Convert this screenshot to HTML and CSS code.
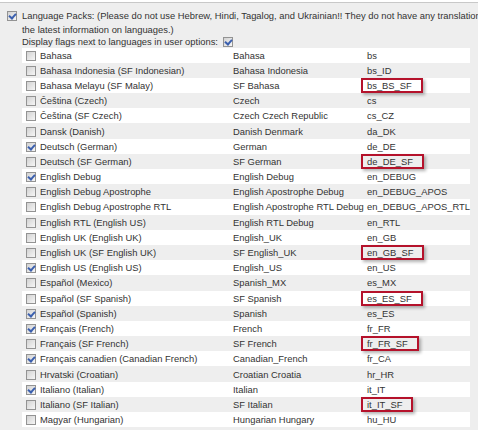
FILE: index.html
```html
<!DOCTYPE html>
<html lang="en">
<head>
  <meta charset="UTF-8" />
  <title>Language Packs</title>
  <link rel="stylesheet" href="styles.css">
</head>
<body>
  <div class="topline"></div>

  <div class="packs">
    <input type="checkbox" class="cb" checked>
    <div class="packs-body">
      <div class="note">Language Packs: (Please do not use Hebrew, Hindi, Tagalog, and Ukrainian!! They do not have any translations for<br>the latest information on languages.)</div>
      <div class="flags">Display flags next to languages in user options: <input type="checkbox" class="cb" checked></div>

      <table class="langs">
        <colgroup><col class="c1"><col class="c2"><col class="c3"></colgroup>
        <tr><td class="name"><input type="checkbox" class="cb">Bahasa</td><td>Bahasa</td><td>bs</td></tr>
        <tr><td class="name"><input type="checkbox" class="cb">Bahasa Indonesia (SF Indonesian)</td><td>Bahasa Indonesia</td><td>bs_ID</td></tr>
        <tr><td class="name"><input type="checkbox" class="cb">Bahasa Melayu (SF Malay)</td><td>SF Bahasa</td><td><span class="mark">bs_BS_SF</span></td></tr>
        <tr><td class="name"><input type="checkbox" class="cb">Čeština (Czech)</td><td>Czech</td><td>cs</td></tr>
        <tr><td class="name"><input type="checkbox" class="cb">Čeština (SF Czech)</td><td>Czech Czech Republic</td><td>cs_CZ</td></tr>
        <tr><td class="name"><input type="checkbox" class="cb">Dansk (Danish)</td><td>Danish Denmark</td><td>da_DK</td></tr>
        <tr><td class="name"><input type="checkbox" class="cb" checked>Deutsch (German)</td><td>German</td><td>de_DE</td></tr>
        <tr><td class="name"><input type="checkbox" class="cb">Deutsch (SF German)</td><td>SF German</td><td><span class="mark">de_DE_SF</span></td></tr>
        <tr><td class="name"><input type="checkbox" class="cb" checked>English Debug</td><td>English Debug</td><td>en_DEBUG</td></tr>
        <tr><td class="name"><input type="checkbox" class="cb">English Debug Apostrophe</td><td>English Apostrophe Debug</td><td>en_DEBUG_APOS</td></tr>
        <tr><td class="name"><input type="checkbox" class="cb">English Debug Apostrophe RTL</td><td>English Apostrophe RTL Debug</td><td>en_DEBUG_APOS_RTL</td></tr>
        <tr><td class="name"><input type="checkbox" class="cb">English RTL (English US)</td><td>English RTL Debug</td><td>en_RTL</td></tr>
        <tr><td class="name"><input type="checkbox" class="cb">English UK (English UK)</td><td>English_UK</td><td>en_GB</td></tr>
        <tr><td class="name"><input type="checkbox" class="cb">English UK (SF English UK)</td><td>SF English_UK</td><td><span class="mark">en_GB_SF</span></td></tr>
        <tr><td class="name"><input type="checkbox" class="cb" checked>English US (English US)</td><td>English_US</td><td>en_US</td></tr>
        <tr><td class="name"><input type="checkbox" class="cb">Español (Mexico)</td><td>Spanish_MX</td><td>es_MX</td></tr>
        <tr><td class="name"><input type="checkbox" class="cb">Español (SF Spanish)</td><td>SF Spanish</td><td><span class="mark">es_ES_SF</span></td></tr>
        <tr><td class="name"><input type="checkbox" class="cb" checked>Español (Spanish)</td><td>Spanish</td><td>es_ES</td></tr>
        <tr><td class="name"><input type="checkbox" class="cb" checked>Français (French)</td><td>French</td><td>fr_FR</td></tr>
        <tr><td class="name"><input type="checkbox" class="cb">Français (SF French)</td><td>SF French</td><td><span class="mark">fr_FR_SF</span></td></tr>
        <tr><td class="name"><input type="checkbox" class="cb" checked>Français canadien (Canadian French)</td><td>Canadian_French</td><td>fr_CA</td></tr>
        <tr><td class="name"><input type="checkbox" class="cb">Hrvatski (Croatian)</td><td>Croatian Croatia</td><td>hr_HR</td></tr>
        <tr><td class="name"><input type="checkbox" class="cb" checked>Italiano (Italian)</td><td>Italian</td><td>it_IT</td></tr>
        <tr><td class="name"><input type="checkbox" class="cb">Italiano (SF Italian)</td><td>SF Italian</td><td><span class="mark">it_IT_SF</span></td></tr>
        <tr><td class="name"><input type="checkbox" class="cb">Magyar (Hungarian)</td><td>Hungarian Hungary</td><td>hu_HU</td></tr>
      </table>
    </div>
  </div>
</body>
</html>
```

FILE: styles.css
```css
* { box-sizing: border-box; }
body {
  margin: 0;
  background: #eeeeee;
  font-family: "Liberation Sans", Arial, sans-serif;
  font-size: 9.4px;
  color: #333;
  overflow: hidden;
}
.topline {
  height: 3px;
  background: #fff;
  border-bottom: 1px solid #c8c8c8;
}

/* checkbox, old windows look */
.cb {
  appearance: none;
  -webkit-appearance: none;
  position: relative;
  width: 10px;
  height: 10px;
  margin: 0;
  border: 1px solid #939393;
  background: linear-gradient(135deg, #d2d2d2, #f6f6f6);
  vertical-align: middle;
  flex: none;
}
.cb:checked::after {
  content: "";
  position: absolute;
  left: 1px;
  top: 1px;
  width: 5px;
  height: 3px;
  border-left: 2px solid #3a5fae;
  border-bottom: 2px solid #3a5fae;
  transform: rotate(-48deg);
}

.packs {
  display: flex;
  padding: 6px 0 0 7px;
}
.packs > .cb { margin: 2px 5px 0 0; }
.packs-body { flex: 1; min-width: 0; }

.note, .flags {
  line-height: 13.5px;
  white-space: nowrap;
}
.flags { display: flex; align-items: center; gap: 5px; line-height: 12px; margin-bottom: -0.5px; }

.langs {
  width: 448px;
  border-collapse: collapse;
  table-layout: fixed;
}
.langs .c1 { width: 211px; }
.langs .c2 { width: 134px; }
.langs tr:nth-child(odd) { background: #fff; }
.langs td {
  height: 15.2px;
  padding: 0;
  white-space: nowrap;
  overflow: visible;
}
.langs td.name { padding-left: 4px; }
.langs td.name .cb { margin: -1px 4px 0 0; }

/* red annotation boxes */
.mark {
  display: inline-block;
  margin-left: -6px;
  padding: 0 9px 0 4px;
  line-height: 11px;
  border: 2px solid #b5122b;
  box-shadow: 2px 2px 3px rgba(0, 0, 0, 0.3);
}
```
